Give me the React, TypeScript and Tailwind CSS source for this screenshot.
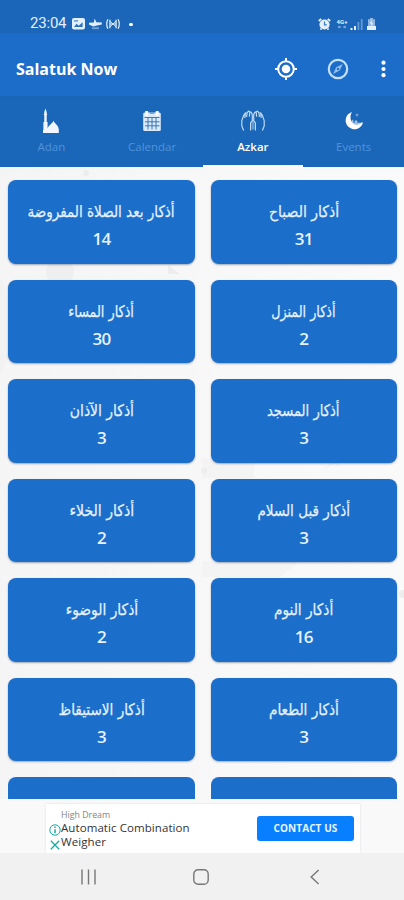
import React from "react";

type Azkar = { title: string; count: number; fit: string };

const azkar: Azkar[] = [
  { title: "أذكار بعد الصلاة المفروضة", count: 14, fit: "scale-x-[0.845]" },
  { title: "أذكار الصباح", count: 31, fit: "scale-x-[0.875]" },
  { title: "أذكار المساء", count: 30, fit: "scale-x-[0.8]" },
  { title: "أذكار المنزل", count: 2, fit: "scale-x-[0.795]" },
  { title: "أذكار الآذان", count: 3, fit: "scale-x-[0.87]" },
  { title: "أذكار المسجد", count: 3, fit: "scale-x-[0.82]" },
  { title: "أذكار الخلاء", count: 2, fit: "scale-x-[0.88]" },
  { title: "أذكار قبل السلام", count: 3, fit: "scale-x-[0.845]" },
  { title: "أذكار الوضوء", count: 2, fit: "scale-x-[0.865]" },
  { title: "أذكار النوم", count: 16, fit: "scale-x-[0.855]" },
  { title: "أذكار الاستيقاظ", count: 3, fit: "scale-x-[0.85]" },
  { title: "أذكار الطعام", count: 3, fit: "scale-x-[0.855]" },
];

function StatusBar() {
  return (
    <div className="flex h-[33px] shrink-0 items-end bg-[#1b66b8] pb-[3px] pl-[30px] pr-[28px] text-[#e3effb]">
      <span className="w-[42px] font-['Roboto',sans-serif] text-[15px] leading-[14px] tracking-[-0.2px]">23:04</span>
      <svg className="h-3 w-[13px]" viewBox="0 0 13 12">
        <rect width="13" height="11.5" rx="2" fill="currentColor" />
        <path d="M2 9 4.6 5.8 6.8 7.8 10.6 4.2V9Z" fill="#2b70bd" />
        <rect x="2" y="2.2" width="4" height="1.4" fill="#5c93d0" />
      </svg>
      <svg className="ml-[4px] h-3 w-[13px]" viewBox="0 0 13 12" fill="currentColor">
        <path d="M5.6.5 7.4 4.2 12.8 4.6v1.8L8 7.4 4.2 8.6 0 6.4V4.8l4.9-.2Z" />
        <path d="M3 10.2h7" stroke="currentColor" strokeOpacity=".45" strokeWidth="1.8" />
      </svg>
      <svg className="ml-1 h-3 w-[14px]" viewBox="0 0 15 12" fill="none" stroke="currentColor" strokeWidth="1.3">
        <path d="M2 .8Q-.4 6 2 11.2M13 .8Q15.4 6 13 11.2M4.2 1.5v9M10.8 1.5v9M4.2 6h6.6" />
        <path d="m4.2 3 6.6 6m0-6L4.2 9" strokeWidth="1" />
      </svg>
      <span className="mb-1 ml-[9px] h-[3.5px] w-[3.5px] rounded-full bg-white" />
      <span className="flex-1" />
      <svg className="h-3 w-[13px]" viewBox="0 0 13 12">
        <path d="M.8 3 3.2.8M12.2 3 9.8.8M2.5 11.7l1-1.2m7 1.2-1-1.2" stroke="currentColor" strokeWidth="1.8" />
        <circle cx="6.5" cy="6.5" r="5.1" fill="currentColor" />
        <path d="M6.5 3.5v3.3h2.3" fill="none" stroke="#3b7bc4" strokeWidth="1.2" />
      </svg>
      <span className="ml-[5px] flex h-3 w-3 flex-col items-center font-['Roboto',sans-serif]">
        <span className="text-[6px] font-bold leading-[7px]">4G+</span>
        <svg className="h-1 w-2 opacity-60" viewBox="0 0 8 4" fill="none" stroke="currentColor">
          <path d="M0 2h3m2 0h3M1 .8v2.4M7 .8v2.4" />
        </svg>
      </span>
      <svg className="ml-[2px] h-3 w-[13px]" viewBox="0 0 13 12" fill="currentColor">
        <path d="M.5 10h2v2h-2zM4 8h2v4H4z" />
        <path d="M7.5 4h1.8v8H7.5zM10.8 1h1.8v11h-1.8z" opacity=".38" />
      </svg>
      <svg className="ml-1 h-3 w-[9px]" viewBox="0 0 9 12" fill="currentColor">
        <path d="M3 0h3v1.2h2V8H1V1.2h2Z" opacity=".6" />
        <path d="M0 8h9v4H0zM4.6 2 2.8 5.6h1.4v3L6.2 5H4.8Z" />
      </svg>
    </div>
  );
}

function AppBar() {
  return (
    <header className="flex h-[63px] shrink-0 items-center bg-[#1c6dca] pl-4 pr-[18px] pt-[8px] text-white">
      <h1 className="flex-1 font-['Open_Sans',sans-serif] text-[16px] font-bold leading-5">Salatuk Now</h1>
      <svg className="h-6 w-6" viewBox="0 0 24 24" fill="none" stroke="currentColor" strokeWidth="2">
        <circle cx="12" cy="12" r="7.8" />
        <circle cx="12" cy="12" r="4.3" fill="currentColor" stroke="none" />
        <path d="M12 1v4m0 14v4M1 12h4m14 0h4" />
      </svg>
      <svg className="ml-[28px] h-6 w-6 text-[#c7e1fa]" viewBox="0 0 24 24" fill="none" stroke="currentColor">
        <circle cx="12" cy="12" r="9.2" strokeWidth="2.2" />
        <path d="m16.8 7-3.1 6.6L7 17l3.2-6.7Z" fill="currentColor" stroke="none" opacity=".7" />
        <circle cx="12" cy="12" r="1.2" fill="#1c6dca" stroke="none" />
      </svg>
      <svg className="ml-[31px] h-[18px] w-[5px]" viewBox="0 0 5 18" fill="currentColor">
        <circle cx="2.5" cy="2.7" r="2.1" />
        <circle cx="2.5" cy="9" r="2.1" />
        <circle cx="2.5" cy="15.2" r="2.1" />
      </svg>
    </header>
  );
}

function MosqueIcon() {
  return (
    <svg className="h-[26px] w-[26px]" viewBox="0 0 26 26" fill="#f2f7ff">
      <path d="M6.3 4 7.5.5 8.7 4v1.5l.6.7-.6 1V14H6.3V7.2l-.6-1 .6-.7ZM5.4 14h4.2v6.5c.3-2.2 2.6-3.3 4.1-5.2.7-.8 1.4-1.5 1.8-2.6.4 1.1 1 1.8 1.7 2.6 1.2 1.5 2.6 2.5 3.1 3.9v.8l.5 1V25H5V22h.4Z" />
    </svg>
  );
}

function CalendarIcon() {
  return (
    <svg className="h-[26px] w-[26px]" viewBox="0 0 26 26">
      <rect x="4.2" y="4.5" width="17.6" height="18.5" rx="1.5" fill="#dbeafa" />
      <path d="M7.7 3v4.4M18.2 3v4.4" stroke="#fff" strokeWidth="2.8" />
      <path d="M5.5 9.5h15M6 13.8h14.5M6 17.8h14.5M9 10v11.5M13 10v11.5M17 10v11.5" stroke="#286cb7" strokeWidth=".9" />
      <path d="M11 5.2h4.2" stroke="#4a86ca" />
    </svg>
  );
}

function HandsIcon() {
  return (
    <svg className="h-[26px] w-[26px]" viewBox="0 0 26 26" fill="none" stroke="#c5def5" strokeWidth="1.15">
      <path d="M3.6 22.5 1.8 18v-5.5L3.6 7.6 5.4 4.8 7 5.2 8.4 3.2l1.6.6 1.3.6 1 2.2v6L10.6 15v7.5M5.4 5 4.8 10M7 5.4 6.6 9M9.8 4 9.4 8.6" />
      <path d="M22.4 22.5 24.2 18v-5.5l-1.8-4.9-1.8-2.8-1.6.4-1.4-2-1.6.6-1.3.6-1 2.2v6l1.7 2.4v7.5M20.6 5l.6 5M19 5.4l.4 3.6M16.2 4l.4 4.6" />
      <path d="M12.3 12.4v9.2m1.4-9.2v9.2" strokeOpacity=".6" strokeWidth=".9" />
    </svg>
  );
}

function MoonIcon() {
  return (
    <svg className="h-[26px] w-[26px]" viewBox="0 0 26 26" fill="#fff">
      <path d="M11 4A8.8 8.8 0 1 0 22 14.6l-2-.2c-1.4 2.5-5.8 3.3-8.2.9C9 12.5 8.8 7.3 11 4Z" />
      <path d="M10.5 16v-3.2l1-1.3 1 1.3v2h1.2v-1.6l1.3-1.3 1.4 1.3v2l1.6-1 1.4 1.2v2Z" opacity=".6" />
      <path d="m16 5 .6 1.2 1.3.1-.9.9.2 1.3-1.2-.6-1.2.6.3-1.3-1-.9 1.4-.1Z" opacity=".4" />
    </svg>
  );
}

const tabs = [
  { label: "Adan", icon: <MosqueIcon />, active: false },
  { label: "Calendar", icon: <CalendarIcon />, active: false },
  { label: "Azkar", icon: <HandsIcon />, active: true },
  { label: "Events", icon: <MoonIcon />, active: false },
];

function Tabs() {
  return (
    <nav className="grid h-[71px] shrink-0 grid-cols-4 border-t border-[#1964b4] bg-[#1a67ba] pl-px">
      {tabs.map((tab) => (
        <div
          key={tab.label}
          className={
            "flex flex-col items-center border-b-2 pt-[11px] font-['Open_Sans',sans-serif] text-[11.5px] " +
            (tab.active ? "border-white font-semibold text-white" : "border-transparent text-[#5093da]")
          }
        >
          {tab.icon}
          <span className="mt-[5px] leading-4">{tab.label}</span>
        </div>
      ))}
    </nav>
  );
}

function Card({ item }: { item: Azkar }) {
  return (
    <div className="flex h-[83.5px] flex-col items-center rounded-[8px] bg-[#1c6ecb] pt-[20px] text-[#e6f2ff] shadow-[0_1px_2px_rgba(30,50,80,0.4)]">
      <span
        dir="rtl"
        lang="ar"
        className={
          "inline-block whitespace-nowrap font-['DejaVu_Sans',sans-serif] text-[16px] leading-6 [-webkit-text-stroke:0.25px_#e6f2ff] " +
          item.fit
        }
      >
        {item.title}
      </span>
      <span className="mt-[5px] font-['Open_Sans',sans-serif] text-[17px] font-semibold leading-5 tracking-[-0.7px]">
        {item.count}
      </span>
    </div>
  );
}

function AdBanner() {
  return (
    <div className="flex h-[54px] shrink-0 bg-[#f9f9f9] pl-[46px] pt-[5px]">
      <div className="flex h-[49px] w-[314px] bg-white shadow-[0_0_2px_rgba(0,0,0,0.12)]">
        <div className="flex w-[15px] flex-col items-center pl-[2px] pt-[20px]">
          <svg className="h-3 w-3" viewBox="0 0 12 12" fill="none" stroke="#18aaa8">
            <circle cx="6" cy="6" r="5.2" />
            <path d="M6 5.2v4M6 2.5V4" strokeWidth="1.5" />
          </svg>
          <svg className="mt-1 h-[10px] w-[10px]" viewBox="0 0 10 10" stroke="#18aaa8" strokeWidth="1.3">
            <path d="m.8.8 8.4 8.4m0-8.4L.8 9.2" />
          </svg>
        </div>
        <div className="flex-1 pt-[5px] font-['Open_Sans',sans-serif] text-[#333]">
          <div className="text-[8.8px] leading-[12px] text-[#858585]">High Dream</div>
          <div className="whitespace-nowrap text-[11.5px] leading-[14px] tracking-[0.08px]">
            Automatic Combination
            <br />
            Weigher
          </div>
        </div>
        <button className="mr-[6px] mt-[12px] h-[25px] w-[97px] whitespace-nowrap rounded-[3px] bg-[#087fff] font-['Open_Sans',sans-serif] text-[10px] font-bold tracking-[0.1px] text-[#eaf5ff]">
          CONTACT US
        </button>
      </div>
    </div>
  );
}

function SystemNav() {
  return (
    <div className="flex h-[47px] shrink-0 items-center bg-[#f1f1f1] pl-[81px] text-[#777]">
      <svg className="h-4 w-[15px]" viewBox="0 0 15 16" stroke="currentColor" strokeWidth="1.4">
        <path d="M1 .5v15M7.5.5v15M14 .5v15" />
      </svg>
      <svg className="ml-[97px] h-4 w-4" viewBox="0 0 16 16" fill="none" stroke="currentColor" strokeWidth="1.4">
        <rect x=".8" y=".8" width="14.4" height="14.4" rx="4.3" />
      </svg>
      <svg className="ml-[101px] h-4 w-[10px]" viewBox="0 0 10 16" fill="none" stroke="currentColor" strokeWidth="1.4">
        <path d="M8.6 1 1.2 8l7.4 7" />
      </svg>
    </div>
  );
}

export default function App() {
  return (
    <div className="flex h-[900px] w-[404px] flex-col overflow-hidden bg-[#f8f8f8]">
      <StatusBar />
      <AppBar />
      <Tabs />
      <main className="relative h-[632px] shrink-0 overflow-hidden bg-gradient-to-r from-[#f5f5f5] to-[#fafafa]">
        <svg className="absolute inset-0 h-full w-full" viewBox="0 0 404 632" fill="#ededee">
          <circle cx="86" cy="6" r="3" />
          <circle cx="60" cy="105" r="14" opacity=".8" />
          <circle cx="204" cy="304" r="3" />
          <circle cx="403" cy="427" r="4" />
          <path d="M168 98v9h12ZM324 302l12-9 4 8-5-5Z" />
          <path d="M0 110q18 22 8 80L0 208ZM202 292h52v19h-52ZM202 394h98l-20 16h-78Z" opacity=".4" />
        </svg>
        <div className="relative grid grid-cols-2 gap-x-4 gap-y-[16px] pl-[8.4px] pr-[7.2px] pt-[13px]">
          {azkar.map((item) => (
            <Card key={item.title} item={item} />
          ))}
          <div className="h-[84px] rounded-[8px] bg-[#1c6ecb]" />
          <div className="h-[84px] rounded-[8px] bg-[#1c6ecb]" />
        </div>
      </main>
      <AdBanner />
      <SystemNav />
    </div>
  );
}
